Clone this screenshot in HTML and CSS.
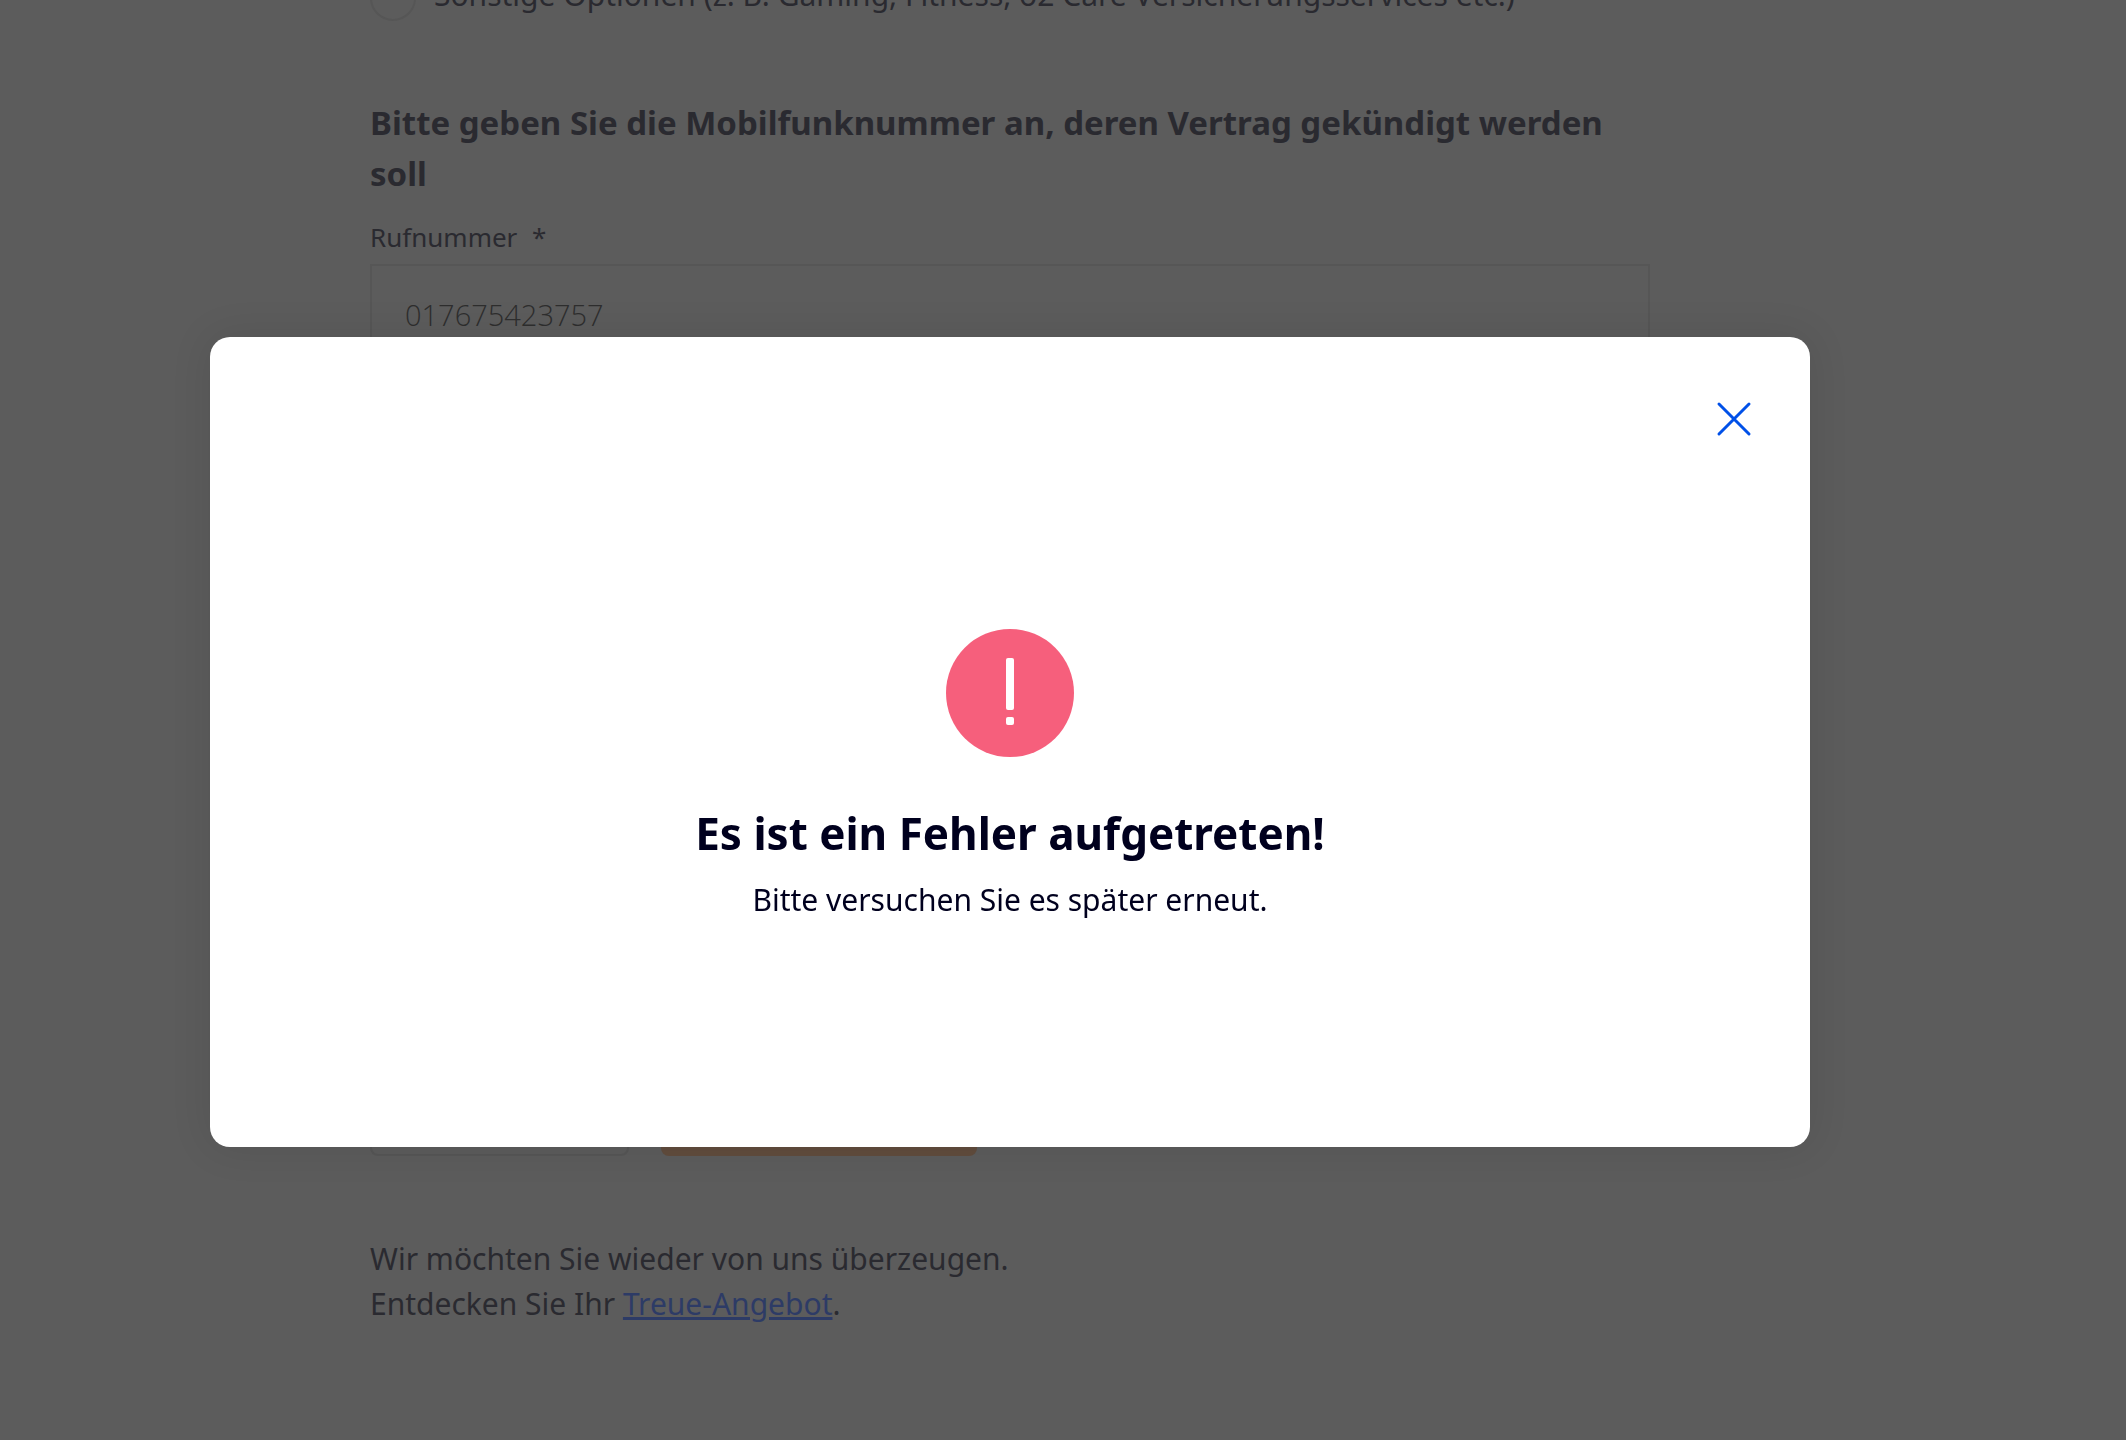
FILE: index.html
```html
<!DOCTYPE html>
<html lang="de">
<head>
  <meta charset="UTF-8">
  <meta name="viewport" content="width=device-width, initial-scale=1.0">
  <title>Kündigung</title>
  <link rel="stylesheet" href="styles.css">
</head>
<body>
<main class="page">
  <form class="form">
    <label class="option">
      <input type="radio" name="option">
      <span>Sonstige Optionen (z. B. Gaming, Fitness, o2 Care Versicherungsservices etc.)</span>
    </label>
    <h2>Bitte geben Sie die Mobilfunknummer an, deren Vertrag gekündigt werden soll</h2>
    <label class="field-label" for="phone">Rufnummer <span class="required">*</span></label>
    <input class="field" id="phone" type="text" value="017675423757">
    <div class="buttons">
      <button class="button button-back" type="button"></button>
      <button class="button button-next" type="button"></button>
    </div>
    <p class="offer">Wir möchten Sie wieder von uns überzeugen.<br>Entdecken Sie Ihr <a href="#">Treue-Angebot</a>.</p>
  </form>
</main>

<div class="overlay">
  <div class="modal" role="dialog" aria-modal="true" aria-labelledby="modal-title">
    <button class="close" type="button">
      <svg width="36" height="36" viewBox="0 0 36 36" fill="none" stroke="#0050e8" stroke-width="3" stroke-linecap="round">
        <path d="M3 3L33 33M33 3L3 33"/>
      </svg>
    </button>
    <div class="modal-body">
      <svg class="error-icon" width="128" height="128" viewBox="0 0 128 128">
        <circle cx="64" cy="64" r="64" fill="#f65f7c"/>
        <rect x="60" y="29" width="8" height="52" rx="2" fill="#fff"/>
        <rect x="60" y="88" width="8" height="8" rx="2" fill="#fff"/>
      </svg>
      <h1 id="modal-title">Es ist ein Fehler aufgetreten!</h1>
      <p>Bitte versuchen Sie es später erneut.</p>
    </div>
  </div>
</div>
</body>
</html>
```
FILE: styles.css
```css
*{
  box-sizing: border-box;
}
body{
  margin: 0;
  height: 100vh;
  overflow: hidden;
  background: #5c5c5c;
  color: #2a2a30;
  font-family: "Noto Sans", "Open Sans", sans-serif;
}
h1, h2, p{
  margin: 0;
}

/* form behind the dialog, scrolled down a little */
.page{
  margin-top: -25px;
  padding-right: 106px;
}
.form{
  max-width: 1280px;
  margin: 0 auto;
}
.option{
  display: flex;
  align-items: flex-start;
  gap: 18px;
  font-size: 30px;
  line-height: 40px;
}
.option input{
  appearance: none;
  flex: none;
  width: 46px;
  height: 46px;
  margin: 0;
  border: 2px solid #565656;
  border-radius: 50%;
}
h2{
  margin-top: 76px;
  font-size: 33px;
  line-height: 51px;
}
.field-label{
  display: block;
  margin-top: 18px;
  font-size: 26px;
  line-height: 40px;
}
.required{
  margin-left: 8px;
}
.field{
  display: block;
  width: 100%;
  height: 100px;
  margin-top: 7px;
  padding: 0 33px;
  border: 2px solid #565656;
  background: transparent;
  color: #2e2e2e;
  font-family: "Open Sans", sans-serif;
  font-size: 29px;
  font-weight: 300;
}
.buttons{
  display: flex;
  gap: 32px;
  margin-top: 712px;
}
.button{
  height: 80px;
  border: 2px solid #565656;
  border-radius: 8px;
  background: transparent;
}
.button-back{
  width: 259px;
}
.button-next{
  width: 316px;
  border: none;
  background: #614c3d;
}
.offer{
  margin-top: 80px;
  font-size: 30px;
  line-height: 45px;
}
.offer a{
  color: #2d3b66;
  text-decoration-thickness: 3px;
}

.overlay{
  position: fixed;
  inset: 0;
  display: flex;
  align-items: center;
  justify-content: center;
  padding: 44px 106px 0 0;
}
.modal{
  display: flex;
  flex-direction: column;
  width: 1600px;
  max-width: 100%;
  min-height: 810px;
  padding: 50px 44px 48px;
  border-radius: 20px;
  background: #fff;
  box-shadow: 0 0 40px rgba(0, 0, 0, 0.1);
  color: #00001e;
}
.close{
  display: flex;
  align-items: center;
  justify-content: center;
  align-self: flex-end;
  width: 64px;
  height: 64px;
  padding: 0;
  border: none;
  background: none;
}
.modal-body{
  flex: 1;
  display: flex;
  flex-direction: column;
  align-items: center;
  justify-content: center;
  text-align: center;
}
.modal h1{
  margin-top: 44px;
  font-size: 44px;
  line-height: 64px;
}
.modal p{
  margin-top: 12px;
  font-size: 30px;
  line-height: 45px;
}
```
